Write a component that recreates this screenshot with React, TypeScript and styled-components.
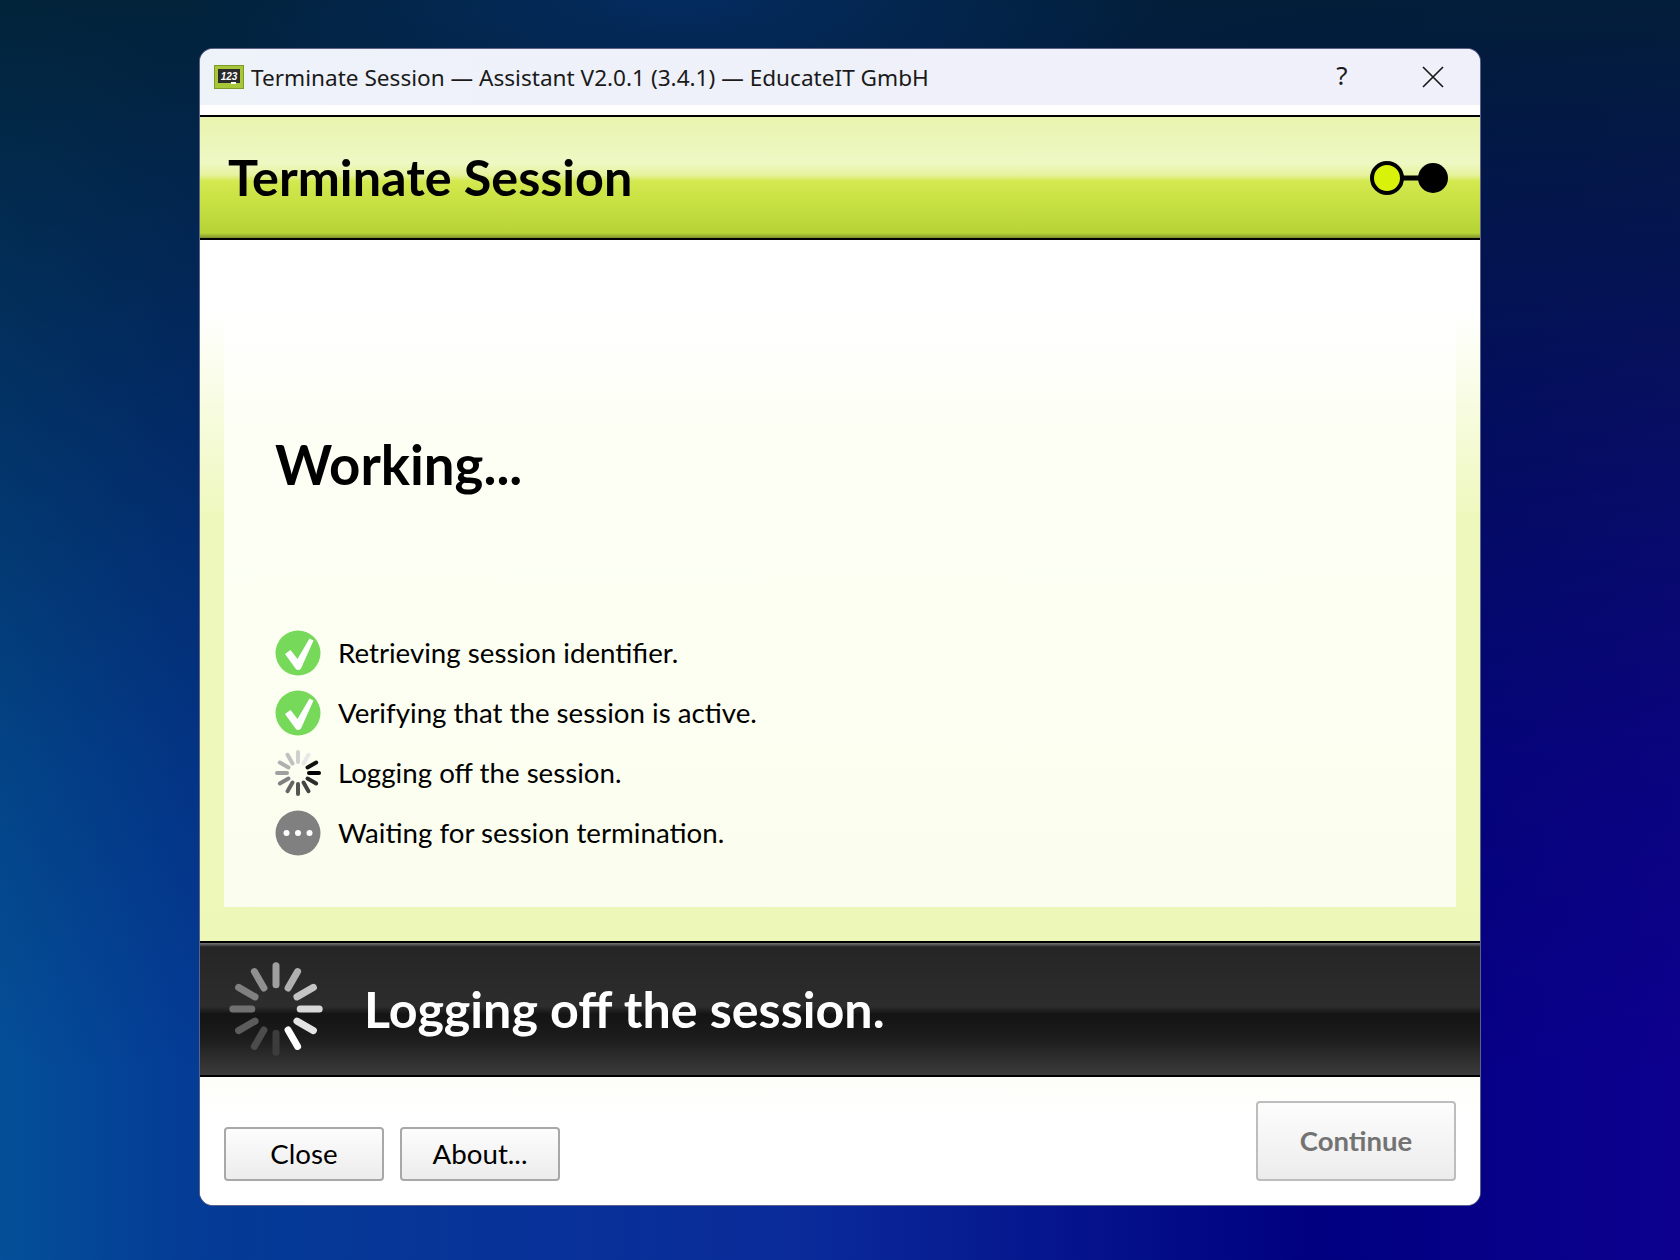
import React from 'react';
import styled, { createGlobalStyle } from 'styled-components';

const GlobalStyle = createGlobalStyle`
  html, body {
    margin: 0;
    padding: 0;
    height: 1260px;
    overflow: hidden;
  }
`;

const Desktop = styled.div`
  box-sizing: border-box;
  width: 1680px;
  height: 1260px;
  padding: 48px 199px 0;
  background:
    radial-gradient(ellipse 500px 120px at 680px 0px, rgba(4, 50, 120, 0.6), rgba(4, 50, 120, 0) 100%),
    linear-gradient(180deg, rgba(2, 32, 50, 0.92) 0%, rgba(1, 26, 58, 0.55) 32%, rgba(0, 20, 60, 0.2) 60%, rgba(0, 0, 0, 0) 85%),
    linear-gradient(90deg, #044f98 0%, #043c96 11%, #0a2a9a 48%, #000080 78%, #0d008f 100%);
`;

const Window = styled.div`
  box-sizing: border-box;
  width: 1282px;
  height: 1158px;
  display: flex;
  flex-direction: column;
  border: 1px solid rgba(85, 90, 130, 0.95);
  border-radius: 14px;
  overflow: hidden;
  background: #fff;
`;

const TitleBar = styled.div`
  height: 56px;
  flex: none;
  display: flex;
  align-items: center;
  padding: 0 36px 0 14px;
  background: linear-gradient(90deg, #eef2f9, #f0f0fa);
`;

const AppIcon = styled.svg`
  width: 30px;
  height: 24px;
  flex: none;
  margin-right: 7px;
`;

const TitleText = styled.div`
  flex: 1;
  font-family: 'Noto Sans', sans-serif;
  font-size: 22.6px;
  color: #1a1a1a;
  white-space: nowrap;
`;

const HelpMark = styled.div`
  width: 24px;
  margin: -4px 68px 0 0;
  text-align: center;
  font-family: 'Noto Sans', sans-serif;
  font-size: 26px;
  line-height: 1;
  color: #1a1a1a;
`;

const CloseIcon = styled.svg`
  width: 22px;
  height: 22px;
  flex: none;
`;

const TitleGap = styled.div`
  height: 10px;
  flex: none;
  background: #fff;
`;

const Banner = styled.div`
  flex: none;
  height: 125px;
  box-sizing: border-box;
  display: flex;
  align-items: center;
  justify-content: space-between;
  padding: 0 30px 0 28px;
  border-top: 2px solid #000;
  border-bottom: 2px solid #000;
  background: linear-gradient(
    180deg,
    #e8f4ae 0%,
    #eef8c4 38%,
    #e6f29c 48%,
    #d3e950 53%,
    #cbe345 66%,
    #b6d336 96%,
    #7f8f2c 100%
  );
`;

const BannerTitle = styled.h1`
  margin: 0;
  font-family: 'Lato', sans-serif;
  font-weight: 700;
  font-size: 50.3px;
  line-height: 1;
  color: #000;
`;

const StepDots = styled.svg`
  width: 80px;
  height: 36px;
  flex: none;
`;

const Body = styled.div`
  flex: 1;
  display: flex;
  padding: 0 24px 34px;
  background: linear-gradient(180deg, #fff 0%, #fff 10%, #eef8bc 40%, #ecf7b8 100%);
`;

const Panel = styled.div`
  flex: 1;
  box-sizing: border-box;
  padding: 192px 0 0 51px;
  background: linear-gradient(180deg, #fff 0%, #fff 10%, #fdfff5 28%, #fbfeee 100%);
`;

const Heading = styled.h2`
  margin: 0 0 126px;
  font-family: 'Lato', sans-serif;
  font-weight: 700;
  font-size: 54.6px;
  line-height: 64px;
  color: #000;
`;

const StepList = styled.div`
  display: flex;
  flex-direction: column;
`;

const StepRow = styled.div`
  height: 60px;
  display: flex;
  align-items: center;
  gap: 17px;
`;

const StepIcon = styled.svg`
  width: 46px;
  height: 46px;
  flex: none;
  margin-top: 2px;
`;

const StepLabel = styled.span`
  font-family: 'Lato', sans-serif;
  font-size: 27.7px;
  color: #000;
`;

const StatusBar = styled.div`
  flex: none;
  height: 136px;
  box-sizing: border-box;
  display: flex;
  align-items: center;
  gap: 40px;
  padding: 0 0 0 28px;
  border-top: 2px solid #000;
  border-bottom: 2px solid #000;
  background: linear-gradient(
    180deg,
    #777 0%,
    #252525 3%,
    #2d2d2d 48%,
    #141414 54%,
    #1c1c1c 72%,
    #3c3c3c 100%
  );
`;

const BigSpinner = styled.svg`
  width: 96px;
  height: 96px;
  flex: none;
`;

const StatusText = styled.div`
  margin-bottom: 2px;
  font-family: 'Lato', sans-serif;
  font-weight: 700;
  font-size: 50.2px;
  color: #fff;
`;

const Footer = styled.div`
  flex: none;
  height: 128px;
  box-sizing: border-box;
  display: flex;
  align-items: flex-end;
  padding: 0 24px 24px;
  gap: 16px;
  background: linear-gradient(180deg, #fdfdf8 0%, #fff 30%);
`;

const Button = styled.div<{ $big?: boolean }>`
  box-sizing: border-box;
  width: ${p => (p.$big ? '200px' : '160px')};
  height: ${p => (p.$big ? '80px' : '54px')};
  margin-left: ${p => (p.$big ? 'auto' : '0')};
  padding-bottom: 2px;
  display: flex;
  align-items: center;
  justify-content: center;
  border: 2px solid ${p => (p.$big ? '#bdbdbd' : '#a8a8a8')};
  border-radius: 4px;
  background: linear-gradient(180deg, #fdfdfd, #ececec);
  font-family: 'Lato', sans-serif;
  font-size: ${p => (p.$big ? '27.5px' : '27.7px')};
  font-weight: ${p => (p.$big ? 700 : 400)};
  color: ${p => (p.$big ? '#737373' : '#000')};
`;

const bars = Array.from({ length: 12 }, (_, i) => i * 30);

const Spinner: React.FC<{ shades: string[]; inner: number; outer: number; width: number; size: number }> = ({
  shades,
  inner,
  outer,
  width,
  size,
}) => (
  <>
    {bars.map((deg, i) => (
      <line
        key={deg}
        x1={size / 2}
        y1={size / 2 - inner}
        x2={size / 2}
        y2={size / 2 - outer}
        stroke={shades[i]}
        strokeWidth={width}
        strokeLinecap="round"
        transform={`rotate(${deg} ${size / 2} ${size / 2})`}
      />
    ))}
  </>
);

// clockwise from twelve o'clock
const bigShades = ['#a0a0a0', '#b0b0b0', '#c4c4c4', '#d8d8d8', '#e4e4e4', '#ffffff', '#3c3c3c', '#4c4c4c', '#5c5c5c', '#707070', '#808080', '#909090'];
const smallShades = ['#d0d0d0', '#e8e8e8', '#111111', '#000000', '#2c2c2c', '#444444', '#555555', '#666666', '#808080', '#a0a0a0', '#b0b0b0', '#c0c0c0'];

const DoneIcon = () => (
  <StepIcon viewBox="0 0 46 46">
    <circle cx="23" cy="23" r="22.5" fill="#77d95a" />
    <path d="M10 24 L15.5 20 L22.5 29 L34.5 8.5 L38.5 10.5 L26 38.5 Q23 41.5 20.5 38.5 Z" fill="#fff" />
  </StepIcon>
);

const PendingIcon = () => (
  <StepIcon viewBox="0 0 46 46">
    <circle cx="23" cy="23" r="22.5" fill="#808080" />
    <circle cx="11.5" cy="23" r="3" fill="#fff" />
    <circle cx="23" cy="23" r="3" fill="#fff" />
    <circle cx="34.5" cy="23" r="3" fill="#fff" />
  </StepIcon>
);

const App: React.FC = () => (
  <Desktop>
    <GlobalStyle />
    <Window>
      <TitleBar>
        <AppIcon viewBox="0 0 30 24">
          <rect x="0.5" y="0.5" width="29" height="23" fill="#a8c63a" stroke="#7f9a28" />
          <rect x="4" y="4" width="22" height="14" fill="#2b2b2b" />
          <text x="15" y="15" textAnchor="middle" fontFamily="'Liberation Sans', sans-serif" fontSize="10" fontWeight="700" fontStyle="italic" fill="#fff">
            123
          </text>
          <rect x="17" y="17" width="5" height="2" fill="#fff" />
        </AppIcon>
        <TitleText>Terminate Session — Assistant V2.0.1 (3.4.1) — EducateIT GmbH</TitleText>
        <HelpMark>?</HelpMark>
        <CloseIcon viewBox="0 0 22 22">
          <path d="M1 1 L21 21 M21 1 L1 21" stroke="#1a1a1a" strokeWidth="1.7" />
        </CloseIcon>
      </TitleBar>
      <TitleGap />
      <Banner>
        <BannerTitle>Terminate Session</BannerTitle>
        <StepDots viewBox="0 0 80 36">
          <line x1="30" y1="18" x2="60" y2="18" stroke="#000" strokeWidth="5" />
          <circle cx="17" cy="18" r="15" fill="#d8f20a" stroke="#000" strokeWidth="4" />
          <circle cx="63" cy="18" r="15" fill="#000" />
        </StepDots>
      </Banner>
      <Body>
        <Panel>
          <Heading>Working...</Heading>
          <StepList>
            <StepRow>
              <DoneIcon />
              <StepLabel>Retrieving session identifier.</StepLabel>
            </StepRow>
            <StepRow>
              <DoneIcon />
              <StepLabel>Verifying that the session is active.</StepLabel>
            </StepRow>
            <StepRow>
              <StepIcon viewBox="0 0 46 46">
                <Spinner shades={smallShades} inner={11} outer={21} width={4} size={46} />
              </StepIcon>
              <StepLabel>Logging off the session.</StepLabel>
            </StepRow>
            <StepRow>
              <PendingIcon />
              <StepLabel>Waiting for session termination.</StepLabel>
            </StepRow>
          </StepList>
        </Panel>
      </Body>
      <StatusBar>
        <BigSpinner viewBox="0 0 96 96">
          <Spinner shades={bigShades} inner={24.2} outer={43.2} width={7} size={96} />
        </BigSpinner>
        <StatusText>Logging off the session.</StatusText>
      </StatusBar>
      <Footer>
        <Button>Close</Button>
        <Button>About...</Button>
        <Button $big>Continue</Button>
      </Footer>
    </Window>
  </Desktop>
);

export default App;
